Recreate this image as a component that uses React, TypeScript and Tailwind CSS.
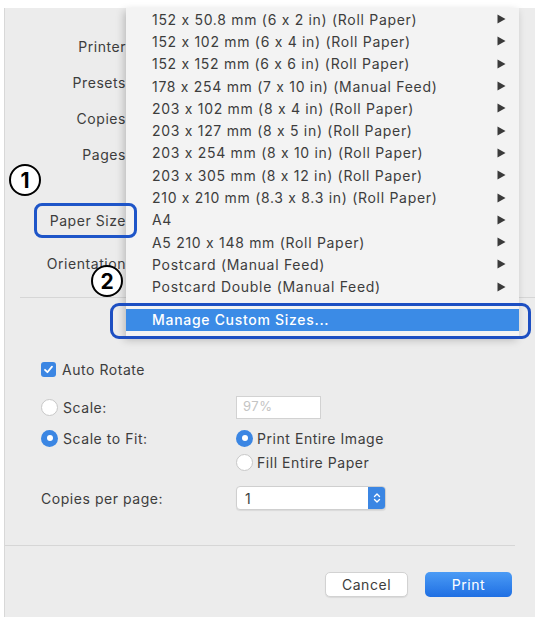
import React from "react";

const menuItems = [
  "152 x 50.8 mm (6 x 2 in) (Roll Paper)",
  "152 x 102 mm (6 x 4 in) (Roll Paper)",
  "152 x 152 mm (6 x 6 in) (Roll Paper)",
  "178 x 254 mm (7 x 10 in) (Manual Feed)",
  "203 x 102 mm (8 x 4 in) (Roll Paper)",
  "203 x 127 mm (8 x 5 in) (Roll Paper)",
  "203 x 254 mm (8 x 10 in) (Roll Paper)",
  "203 x 305 mm (8 x 12 in) (Roll Paper)",
  "210 x 210 mm (8.3 x 8.3 in) (Roll Paper)",
  "A4",
  "A5 210 x 148 mm (Roll Paper)",
  "Postcard (Manual Feed)",
  "Postcard Double (Manual Feed)",
];

function Arrow() {
  return (
    <svg width="9" height="10" viewBox="0 0 9 10" className="shrink-0">
      <path d="M0.5 0.5 L8.5 5 L0.5 9.5 Z" fill="#3a3a3a" />
    </svg>
  );
}

function Radio({ on }: { on?: boolean }) {
  return on ? (
    <div className="w-[17px] h-[17px] rounded-full bg-[#3b86e3] flex items-center justify-center shrink-0">
      <div className="w-[6px] h-[6px] rounded-full bg-white" />
    </div>
  ) : (
    <div className="w-[17px] h-[17px] rounded-full bg-white border border-[#c8c8c8] shrink-0" />
  );
}

export default function App() {
  return (
    <div
      className="relative w-[535px] h-[617px] bg-white overflow-hidden pt-[8px] pl-[4px] text-[#3d3d3d] tracking-[0.55px] [font-feature-settings:'calt'_0]"
      style={{ fontFamily: "Inter, 'Noto Sans', sans-serif" }}
    >
      <div className="h-[609px] bg-[#ececec] border-l border-[#d8d8d8] flex flex-col">
        {/* labels */}
        <div className="w-[121px] flex flex-col items-end pt-[20px] text-[14px]">
          <div className="h-[36px] flex items-center">Printer</div>
          <div className="h-[36px] flex items-center">Presets</div>
          <div className="h-[36px] flex items-center">Copies</div>
          <div className="h-[36px] flex items-center">Pages</div>
          <div className="h-[36px] flex items-center mt-[30px]">Paper Size</div>
          <div className="h-[36px] flex items-center mt-[7px]">Orientation</div>
        </div>
        <div className="h-px bg-[#d6d6d6] ml-[15px] mt-[16px]" />

        {/* options */}
        <div className="pl-[36px] flex flex-col text-[14px]">
          <div className="h-[24px] flex items-center gap-[6px] mt-[59px]">
            <div className="w-[15px] h-[15px] rounded-[3px] bg-[#3b86e3] flex items-center justify-center">
              <svg width="11" height="11" viewBox="0 0 11 11">
                <path d="M2 5.8 L4.4 8.2 L9 2.6" stroke="white" strokeWidth="1.8" fill="none" strokeLinecap="round" strokeLinejoin="round" />
              </svg>
            </div>
            <span>Auto Rotate</span>
          </div>
          <div className="h-[24px] flex items-center mt-[14px]">
            <div className="w-[195px] flex items-center gap-[5px]">
              <Radio />
              <span>Scale:</span>
            </div>
            <div className="w-[85px] h-[23px] bg-white border border-[#d2d2d2] flex items-center pl-[6px] text-[13px] text-[#c4c4c4]">
              97%
            </div>
          </div>
          <div className="h-[24px] flex items-center mt-[7px]">
            <div className="w-[195px] flex items-center gap-[5px]">
              <Radio on />
              <span>Scale to Fit:</span>
            </div>
            <div className="flex items-center gap-[4px]">
              <Radio on />
              <span>Print Entire Image</span>
            </div>
          </div>
          <div className="h-[24px] flex items-center">
            <div className="w-[195px]" />
            <div className="flex items-center gap-[4px]">
              <Radio />
              <span>Fill Entire Paper</span>
            </div>
          </div>
          <div className="h-[24px] flex items-center mt-[12px]">
            <div className="w-[195px]">Copies per page:</div>
            <div className="w-[150px] h-[24px] bg-white rounded-[4px] border border-[#cfcfcf] flex items-center justify-between pl-[8px] shadow-[0_1px_1px_rgba(0,0,0,0.08)]">
              <span>1</span>
              <div className="w-[17px] h-[22px] rounded-r-[3px] bg-[#3b86e3] flex items-center justify-center">
                <svg width="8" height="12" viewBox="0 0 8 12">
                  <path d="M1.5 4.5 L4 2 L6.5 4.5 M1.5 7.5 L4 10 L6.5 7.5" stroke="white" strokeWidth="1.4" fill="none" strokeLinecap="round" strokeLinejoin="round" />
                </svg>
              </div>
            </div>
          </div>
        </div>

        <div className="h-px bg-[#d6d6d6] mt-[35px] mr-[20px]" />

        <div className="flex justify-end gap-[17px] pr-[23px] mt-[26px] text-[14px]">
          <div className="w-[83px] h-[25px] bg-white rounded-[5px] border border-[#d2d2d2] flex items-center justify-center shadow-[0_1px_1px_rgba(0,0,0,0.08)]">
            Cancel
          </div>
          <div className="w-[87px] h-[25px] rounded-[5px] bg-gradient-to-b from-[#4b9bf5] to-[#1f6fe3] text-white flex items-center justify-center">
            Print
          </div>
        </div>
      </div>

      {/* popup menu */}
      <div className="absolute left-[126px] top-[8px] w-[393px] bg-[#f3f3f3] shadow-[-2px_3px_8px_rgba(0,0,0,0.22)] flex flex-col text-[14px] tracking-[0.7px] pb-[6px]">
        {menuItems.map((t) => (
          <div key={t} className="h-[22.3px] flex items-center justify-between pl-[26px] pr-[13px]">
            <span>{t}</span>
            <Arrow />
          </div>
        ))}
        <div className="h-[11px]" />
        <div className="h-[22px] bg-[#3b8be6] text-white font-medium flex items-center pl-[26px]">
          Manage Custom Sizes...
        </div>
      </div>

      {/* annotations */}
      <div className="absolute left-[34px] top-[203px] w-[103px] h-[35px] rounded-[8px] border-[3px] border-[#1e55c8]" />
      <div className="absolute left-[110px] top-[303px] w-[421px] h-[36px] rounded-[9px] border-[3px] border-[#1d4fc2]" />
      <div className="absolute left-[9px] top-[164px] w-[32px] h-[32px] rounded-full border-2 border-black bg-white flex items-center justify-center text-[21px] font-bold text-black leading-none tracking-normal">
        1
      </div>
      <div className="absolute left-[91px] top-[265px] w-[32px] h-[32px] rounded-full border-2 border-black bg-white flex items-center justify-center text-[21px] font-bold text-black leading-none tracking-normal">
        2
      </div>
    </div>
  );
}
